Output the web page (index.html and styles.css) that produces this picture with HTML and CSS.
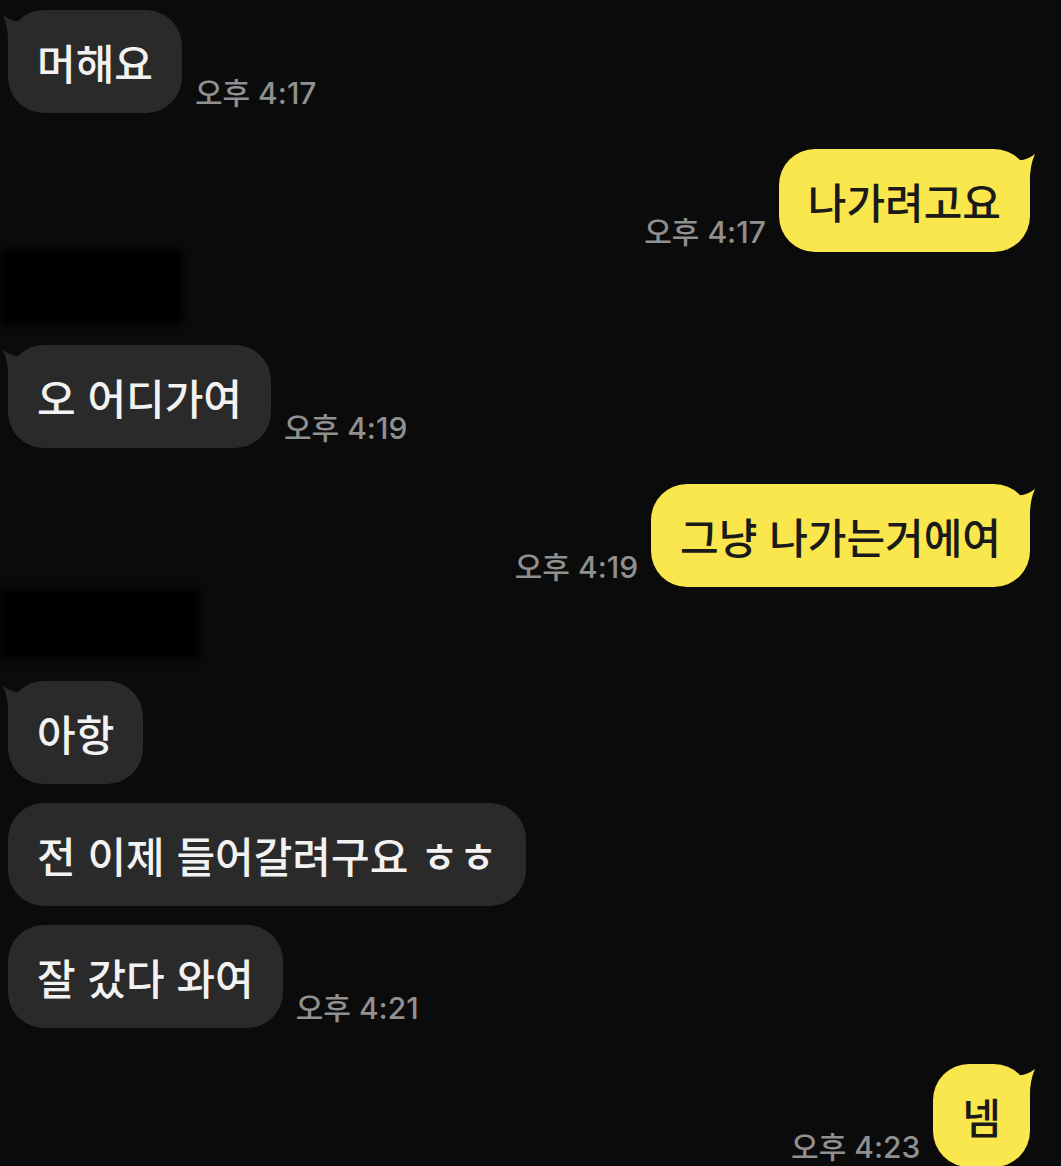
FILE: index.html
```html
<!DOCTYPE html>
<html lang="ko">
<head>
    <meta charset="UTF-8">
    <meta name="viewport" content="width=device-width, initial-scale=1.0">
    <title>채팅</title>
    <link rel="stylesheet" href="styles.css">
</head>
<body>
    <div class="chat">
        <div class="row">
            <div class="bubble other first">
                <svg class="tail" viewBox="0 0 30 34"><path d="M1 1 Q10 8 18 7 L30 7 L30 34 L6 34 Q7 14 1 1 Z"/></svg>
                머해요
            </div>
            <span class="time">오후 4:17</span>
        </div>

        <div class="row me gap-big">
            <span class="time">오후 4:17</span>
            <div class="bubble mine first">
                <svg class="tail" viewBox="0 0 30 34"><path d="M29 1 Q20 8 12 7 L0 7 L0 34 L24 34 Q23 14 29 1 Z"/></svg>
                나가려고요
            </div>
        </div>

        <!-- 가려진 이름 -->
        <div class="blot blot-one"></div>

        <div class="row after-blot">
            <div class="bubble other first">
                <svg class="tail" viewBox="0 0 30 34"><path d="M1 1 Q10 8 18 7 L30 7 L30 34 L6 34 Q7 14 1 1 Z"/></svg>
                오 어디가여
            </div>
            <span class="time">오후 4:19</span>
        </div>

        <div class="row me gap-big">
            <span class="time">오후 4:19</span>
            <div class="bubble mine first">
                <svg class="tail" viewBox="0 0 30 34"><path d="M29 1 Q20 8 12 7 L0 7 L0 34 L24 34 Q23 14 29 1 Z"/></svg>
                그냥 나가는거에여
            </div>
        </div>

        <div class="blot blot-two"></div>

        <div class="row after-blot-two">
            <div class="bubble other first">
                <svg class="tail" viewBox="0 0 30 34"><path d="M1 1 Q10 8 18 7 L30 7 L30 34 L6 34 Q7 14 1 1 Z"/></svg>
                아항
            </div>
        </div>

        <div class="row gap-small">
            <div class="bubble other">전 이제 들어갈려구요 ㅎㅎ</div>
        </div>

        <div class="row gap-small">
            <div class="bubble other">잘 갔다 와여</div>
            <span class="time">오후 4:21</span>
        </div>

        <div class="row me gap-big">
            <span class="time">오후 4:23</span>
            <div class="bubble mine first">
                <svg class="tail" viewBox="0 0 30 34"><path d="M29 1 Q20 8 12 7 L0 7 L0 34 L24 34 Q23 14 29 1 Z"/></svg>
                넴
            </div>
        </div>
    </div>
</body>
</html>
```

FILE: styles.css
```css
body {
    margin: 0;
    background-color: #0b0b0b;
    font-family: "Noto Sans CJK KR", "Noto Sans", sans-serif;
    overflow: hidden;
    height: 1166px;
}

.chat {
    display: flex;
    flex-direction: column;
    padding: 10px 31px 0 8px;
}

.row {
    display: flex;
    align-items: flex-end;
    gap: 13px;
}

.row.me {
    justify-content: flex-end;
}

.gap-big {
    margin-top: 36px;
}

.gap-small {
    margin-top: 19px;
}

.after-blot {
    margin-top: 20px;
}

.after-blot-two {
    margin-top: 22px;
}

.bubble {
    position: relative;
    padding: 25px 29px;
    border-radius: 36px;
    font-size: 42px;
    font-weight: 500;
    line-height: 53px;
    white-space: nowrap;
}

.bubble.other {
    background-color: #2a2a2a;
    color: #f2f2f2;
}

.bubble.mine {
    background-color: #fae64d;
    color: #1a1a1a;
}

.tail {
    position: absolute;
    top: 4px;
    width: 30px;
    height: 34px;
}

.other .tail {
    left: -6px;
    fill: #2a2a2a;
}

.mine .tail {
    right: -6px;
    fill: #fae64d;
}

.time {
    font-family: Inter, "Noto Sans CJK KR", sans-serif;
    font-size: 30px;
    font-weight: 500;
    line-height: 1;
    color: #909090;
    margin-bottom: 5px;
    white-space: nowrap;
}

/* 이름이 지워진 자리 */
.blot {
    background-color: #000;
    border-radius: 4px;
    filter: blur(3px);
    margin-left: -8px;
}

.blot-one {
    width: 182px;
    height: 76px;
    margin-top: -3px;
}

.blot-two {
    width: 200px;
    height: 70px;
    margin-top: 2px;
}
```
